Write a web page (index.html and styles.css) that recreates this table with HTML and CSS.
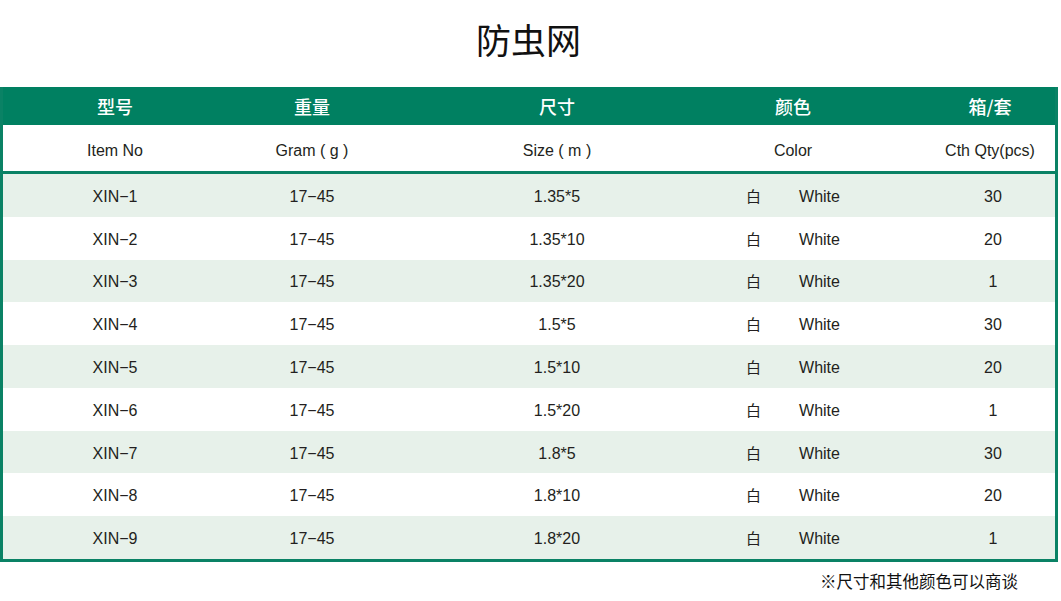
FILE: index.html
```html
<!DOCTYPE html>
<html lang="zh-CN">
<head>
<meta charset="utf-8">
<title>防虫网</title>
<link rel="stylesheet" href="styles.css">
</head>
<body>
<div class="page">
  <h1 class="title">防虫网</h1>
  <div class="table">
    <div class="row head-cn">
      <div class="cell">型号</div>
      <div class="cell">重量</div>
      <div class="cell">尺寸</div>
      <div class="cell">颜色</div>
      <div class="cell last">箱/套</div>
    </div>
    <div class="row head-en">
      <div class="cell">Item No</div>
      <div class="cell">Gram ( g )</div>
      <div class="cell">Size ( m )</div>
      <div class="cell">Color</div>
      <div class="cell last">Cth Qty(pcs)</div>
    </div>
    <div class="body">
      <div class="row data odd"><div class="cell">XIN−1</div><div class="cell">17−45</div><div class="cell">1.35*5</div><div class="cell color"><span class="cn">白</span><span>White</span></div><div class="cell last num">30</div></div>
      <div class="row data"><div class="cell">XIN−2</div><div class="cell">17−45</div><div class="cell">1.35*10</div><div class="cell color"><span class="cn">白</span><span>White</span></div><div class="cell last num">20</div></div>
      <div class="row data odd"><div class="cell">XIN−3</div><div class="cell">17−45</div><div class="cell">1.35*20</div><div class="cell color"><span class="cn">白</span><span>White</span></div><div class="cell last num">1</div></div>
      <div class="row data"><div class="cell">XIN−4</div><div class="cell">17−45</div><div class="cell">1.5*5</div><div class="cell color"><span class="cn">白</span><span>White</span></div><div class="cell last num">30</div></div>
      <div class="row data odd"><div class="cell">XIN−5</div><div class="cell">17−45</div><div class="cell">1.5*10</div><div class="cell color"><span class="cn">白</span><span>White</span></div><div class="cell last num">20</div></div>
      <div class="row data"><div class="cell">XIN−6</div><div class="cell">17−45</div><div class="cell">1.5*20</div><div class="cell color"><span class="cn">白</span><span>White</span></div><div class="cell last num">1</div></div>
      <div class="row data odd"><div class="cell">XIN−7</div><div class="cell">17−45</div><div class="cell">1.8*5</div><div class="cell color"><span class="cn">白</span><span>White</span></div><div class="cell last num">30</div></div>
      <div class="row data"><div class="cell">XIN−8</div><div class="cell">17−45</div><div class="cell">1.8*10</div><div class="cell color"><span class="cn">白</span><span>White</span></div><div class="cell last num">20</div></div>
      <div class="row data odd"><div class="cell">XIN−9</div><div class="cell">17−45</div><div class="cell">1.8*20</div><div class="cell color"><span class="cn">白</span><span>White</span></div><div class="cell last num">1</div></div>
    </div>
  </div>
  <p class="note">※尺寸和其他颜色可以商谈</p>
</div>
</body>
</html>
```

FILE: styles.css
```css
html, body {
  margin: 0;
  padding: 0;
  background: #ffffff;
}

.page {
  width: 1061px;
  height: 601px;
  font-family: "Liberation Sans", "Noto Sans CJK SC", sans-serif;
  color: #231f20;
  overflow: hidden;
}

.title {
  margin: 0;
  height: 87px;
  box-sizing: border-box;
  padding: 0 4px 10px 0;
  display: flex;
  align-items: center;
  justify-content: center;
  font-family: "Noto Sans CJK SC", sans-serif;
  font-weight: 400;
  font-size: 35px;
  line-height: 1;
  color: #111111;
}

.table {
  width: 1058px;
  box-sizing: border-box;
  border-left: 3px solid #0a8265;
  border-right: 3px solid #0a8265;
  border-bottom: 3px solid #0a8265;
}

.row {
  display: grid;
  grid-template-columns: 224px 170px 320px 152px 1fr;
  align-items: center;
}

.cell {
  text-align: center;
  white-space: nowrap;
}

.cell.last {
  padding-left: 56px;
}

.cell.num {
  padding-left: 62px;
}

.head-cn {
  height: 38px;
  background: #008061;
  color: #ffffff;
  font-family: "Noto Sans CJK SC", sans-serif;
  font-weight: 500;
  font-size: 18px;
  line-height: 1;
}

.head-en {
  height: 49px;
  box-sizing: border-box;
  padding-top: 5px;
  background: #ffffff;
  border-bottom: 3px solid #0a8265;
  font-size: 16px;
}

.body {
  display: flex;
  flex-direction: column;
  height: 385px;
}

.data {
  flex: 1;
  font-size: 16px;
  line-height: 18px;
  padding-top: 3px;
  box-sizing: border-box;
}

.data.odd {
  background: #e7f1ea;
}

.color {
  display: flex;
  justify-content: center;
  align-items: baseline;
  gap: 38px;
  height: 18px;
  margin-bottom: 2px;
}

.color .cn {
  font-family: "Noto Sans CJK SC", sans-serif;
  font-size: 15px;
  line-height: 18px;
}

.note {
  margin: 0;
  padding: 11px 43px 0 0;
  text-align: right;
  font-family: "Noto Sans CJK SC", sans-serif;
  font-size: 16.5px;
  line-height: 1;
  color: #111111;
}
```
